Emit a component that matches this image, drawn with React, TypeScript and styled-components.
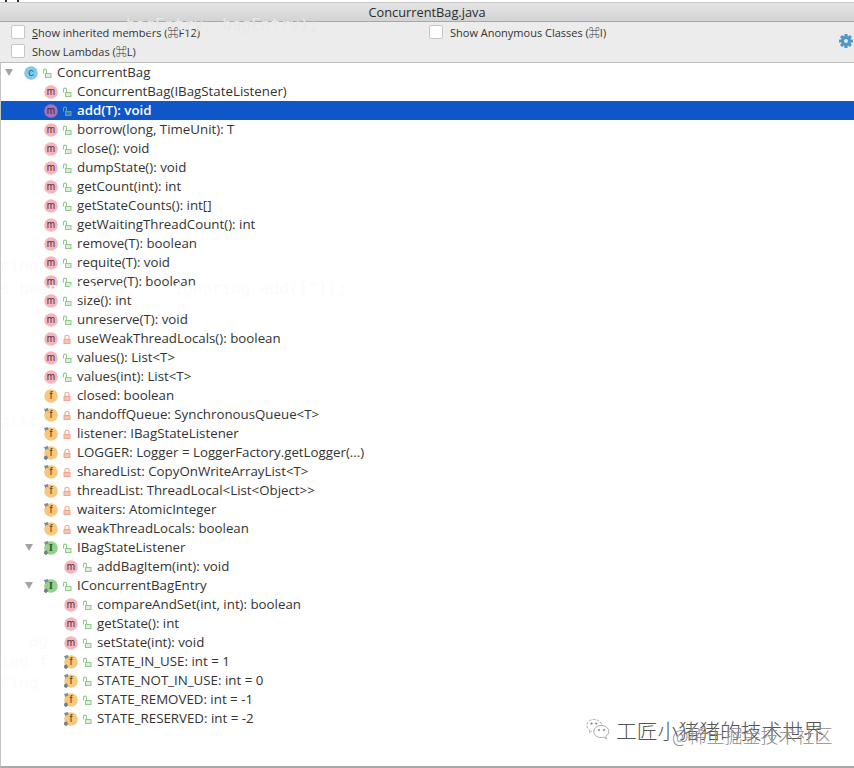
import React from "react";
import styled, { createGlobalStyle } from "styled-components";

const GlobalStyle = createGlobalStyle`
  html, body {
    margin: 0;
    padding: 0;
    background: #ffffff;
  }
  body {
    font-family: "Open Sans", "Liberation Sans", "Noto Sans CJK SC", sans-serif;
    color: #333333;
  }
`;

const Page = styled.div`
  position: relative;
  width: 854px;
  height: 768px;
  overflow: hidden;
  display: flex;
  flex-direction: column;
  background: #ffffff;
`;

const TopStrip = styled.div`
  height: 3px;
  flex: none;
  display: flex;
  gap: 10px;
  padding-left: 5px;
  background: #fff;
  border-bottom: 1px solid #c9c9c9;
  box-sizing: border-box;
`;

const Tick = styled.span`
  width: 2px;
  height: 2px;
  background: #333;
`;

const TitleBar = styled.div`
  height: 19px;
  flex: none;
  box-sizing: border-box;
  background: linear-gradient(#e4e4e4, #d3d3d3);
  border-bottom: 1px solid #a8a8a8;
  display: flex;
  align-items: center;
  justify-content: center;
  font-size: 12.8px;
  color: #2c2c2c;
`;

const Options = styled.div`
  height: 41px;
  flex: none;
  box-sizing: border-box;
  background: #ececec;
  border-bottom: 1px solid #bdbdbd;
  display: grid;
  grid-template-columns: 429px 1fr 16px;
  grid-template-rows: 19px 19px;
`;

const OptionCell = styled.label<{ $pad: number }>`
  display: flex;
  align-items: center;
  font-size: 11px;
  color: #333;
  padding-left: ${(p) => p.$pad}px;
`;

const Box = styled.span`
  width: 12px;
  height: 12px;
  margin-right: 7px;
  border-radius: 2px;
  border: 1px solid #c6c6c6;
  background: #ffffff;
  box-sizing: content-box;
`;

const GearCell = styled.div`
  grid-column: 3;
  grid-row: 1 / span 2;
  display: flex;
  align-items: center;
  justify-content: flex-start;
  margin-left: 1px;
`;

const Tree = styled.div`
  flex: 1;
  box-sizing: border-box;
  border-left: 1px solid #c4c4c4;
  border-bottom: 2px solid #a9a9a9;
  display: flex;
  flex-direction: column;
`;

const Row = styled.div<{ $selected?: boolean; $indent: number }>`
  height: 19px;
  flex: none;
  display: flex;
  align-items: center;
  padding-left: ${(p) => p.$indent}px;
  background: ${(p) => (p.$selected ? "#0f56c9" : "transparent")};
  color: ${(p) => (p.$selected ? "#ffffff" : "#333333")};
  font-weight: ${(p) => (p.$selected ? 600 : 400)};
  font-size: 13.3px;
  white-space: nowrap;
`;

const RowLabel = styled.span`
  margin-bottom: 2px;
`;

const Arrow = styled.span`
  width: 0;
  height: 0;
  flex: none;
  margin: 0 10px 0 -18px;
  border-left: 4px solid transparent;
  border-right: 4px solid transparent;
  border-top: 7px solid #a3a3a3;
`;

const IconSlot = styled.span`
  display: flex;
  flex: none;
  margin-right: 3px;
`;

const LockSlot = styled.span`
  display: flex;
  flex: none;
  margin-right: 5px;
`;

const Ghost = styled.div<{ $top: number; $left: number; $tone?: string }>`
  position: absolute;
  top: ${(p) => p.$top}px;
  left: ${(p) => p.$left}px;
  font-family: "DejaVu Sans Mono", monospace;
  font-size: 16px;
  color: ${(p) => p.$tone ?? "#fbfbfb"};
  white-space: pre;
  pointer-events: none;
`;

const Watermark = styled.div`
  position: absolute;
  left: 586px;
  top: 715px;
  display: flex;
  align-items: center;
  pointer-events: none;
`;

const WatermarkText = styled.span`
  margin-left: 6px;
  font-size: 20.8px;
  color: #555;
  font-family: "Noto Sans CJK SC", sans-serif;
  font-weight: 300;
`;

const WatermarkOver = styled.span`
  position: absolute;
  left: 672px;
  top: 722px;
  font-size: 18px;
  color: #8c8c8c;
  font-family: "Noto Sans CJK SC", sans-serif;
  font-weight: 300;
  pointer-events: none;
`;

type Kind = "c" | "m" | "f" | "i";
type Mod = "final" | "static" | "none";

const palette: Record<Kind, { fill: string; ink: string }> = {
  c: { fill: "#7fc9ea", ink: "#2d5f80" },
  m: { fill: "#f5b5bd", ink: "#5c2a2f" },
  f: { fill: "#f7c77c", ink: "#5f4620" },
  i: { fill: "#94d08e", ink: "#2f5a2c" },
};

function Badge({ kind, mod, selected }: { kind: Kind; mod: Mod; selected?: boolean }) {
  const { fill, ink } = palette[kind];
  const letter = kind === "i" ? "I" : kind;
  return (
    <svg width="16" height="16" viewBox="0 0 16 16">
      <circle cx="8" cy="8" r="6.8" fill={selected ? "#a873b4" : fill} />
      <text
        x="8"
        y="11.300"
        textAnchor="middle"
        fontSize={kind === "m" ? 10 : 11}
        fontFamily={kind === "i" ? "Liberation Serif, serif" : "Liberation Sans, sans-serif"}
        fontWeight={kind === "i" ? 700 : 400}
        fill={selected ? "#3b1e48" : ink}
      >
        {letter}
      </text>
      {(mod === "final" || mod === "static") && (
        <path d="M1 2 L5 1 L5.400 4.200 L3.700 3.800 L2.500 5.500 Z" fill="#7f8c94" />
      )}
      {mod === "static" && (
        <path d="M1.500 11 L4 10.500 L5 13.300 L3 15.300 L0.800 13.500 Z" fill="#6f7f8a" />
      )}
    </svg>
  );
}

function Lock({ open, selected }: { open: boolean; selected?: boolean }) {
  const color = open ? (selected ? "#62a888" : "#8fca8b") : "#f0a48c";
  const fill = open ? (selected ? "#3c7cb0" : "#dcefd9") : "#f6c4b3";
  return (
    <svg width="10" height="12" viewBox="0 0 10 12">
      {open ? (
        <path d="M1.500 6.500V3.600a1.500 1.500 0 0 1 3 0V6" fill="none" stroke={color} strokeWidth="1.100" />
      ) : (
        <path d="M3 6.500V4.200a2 2 0 0 1 4 0V6.500" fill="none" stroke={color} strokeWidth="1.100" />
      )}
      <rect
        x={open ? 3.500 : 2}
        y="6.500"
        width={open ? 5.500 : 6}
        height="4"
        fill={fill}
        stroke={color}
        strokeWidth="1"
      />
    </svg>
  );
}

function Gear() {
  return (
    <svg width="14" height="14" viewBox="0 0 14 14">
      <g fill="#4f97c6">
        {[0, 45, 90, 135].map((a) => (
          <rect key={a} x="5.400" y="0" width="3.200" height="14" rx="0.600" transform={`rotate(${a} 7 7)`} />
        ))}
        <circle cx="7" cy="7" r="5" />
      </g>
      <circle cx="7" cy="7" r="2" fill="#dcebf4" />
    </svg>
  );
}

function WeChat() {
  return (
    <svg width="24" height="26" viewBox="0 0 26 26" fill="none" stroke="#9a9a9a" strokeWidth="0.900">
      <path d="M17 7C15.500 3.500 12 1.500 8.500 1.500 4.200 1.500 1 4.500 1 8c0 2.200 1.200 4 3 5.200L3.400 16l3-1.600c.8.2 1.400.3 2.200.3" strokeDasharray="3 1.400" />
      <path d="M16.500 8C12 8 8.500 11 8.500 14.600c0 3.700 3.500 6.600 8 6.600 1 0 1.900-.1 2.700-.4l2.800 1.800-.6-2.800c2-1.200 3.200-3.100 3.200-5.200C24.600 11 21 8 16.500 8z" />
      <circle cx="6" cy="6" r="0.900" fill="#777" />
      <circle cx="11" cy="6" r="0.900" fill="#777" />
      <circle cx="14" cy="13" r="0.900" fill="#777" />
      <circle cx="19.500" cy="13" r="0.900" fill="#777" />
    </svg>
  );
}

interface Item {
  label: string;
  kind: Kind;
  indent: number;
  mod?: Mod;
  lock?: boolean;
  selected?: boolean;
  expandable?: boolean;
}

const method = (label: string, lock = false, indent = 42): Item => ({ label, kind: "m", indent, lock });
const field = (label: string, mod: Mod = "final", lock = true, indent = 42): Item => ({ label, kind: "f", indent, mod, lock });

const items: Item[] = [
  { label: "ConcurrentBag", kind: "c", indent: 22, expandable: true },
  method("ConcurrentBag(IBagStateListener)"),
  { ...method("add(T): void"), selected: true },
  method("borrow(long, TimeUnit): T"),
  method("close(): void"),
  method("dumpState(): void"),
  method("getCount(int): int"),
  method("getStateCounts(): int[]"),
  method("getWaitingThreadCount(): int"),
  method("remove(T): boolean"),
  method("requite(T): void"),
  method("reserve(T): boolean"),
  method("size(): int"),
  method("unreserve(T): void"),
  method("useWeakThreadLocals(): boolean", true),
  method("values(): List<T>"),
  method("values(int): List<T>"),
  field("closed: boolean", "none"),
  field("handoffQueue: SynchronousQueue<T>"),
  field("listener: IBagStateListener"),
  field("LOGGER: Logger = LoggerFactory.getLogger(...)", "static"),
  field("sharedList: CopyOnWriteArrayList<T>"),
  field("threadList: ThreadLocal<List<Object>>"),
  field("waiters: AtomicInteger"),
  field("weakThreadLocals: boolean"),
  { label: "IBagStateListener", kind: "i", indent: 42, expandable: true, mod: "static" },
  method("addBagItem(int): void", false, 62),
  { label: "IConcurrentBagEntry", kind: "i", indent: 42, expandable: true, mod: "static" },
  method("compareAndSet(int, int): boolean", false, 62),
  method("getState(): int", false, 62),
  method("setState(int): void", false, 62),
  field("STATE_IN_USE: int = 1", "static", false, 62),
  field("STATE_NOT_IN_USE: int = 0", "static", false, 62),
  field("STATE_REMOVED: int = -1", "static", false, 62),
  field("STATE_RESERVED: int = -2", "static", false, 62),
];

export default function App() {
  return (
    <Page>
      <GlobalStyle />
      <TopStrip>
        <Tick />
        <Tick />
      </TopStrip>
      <TitleBar>ConcurrentBag.java</TitleBar>
      <Options>
        <OptionCell $pad={11}>
          <Box />
          <span><u>S</u>how inherited members (⌘F12)</span>
        </OptionCell>
        <OptionCell $pad={0}>
          <Box />
          <span>Show Anonymous Classes (⌘I)</span>
        </OptionCell>
        <GearCell>
          <Gear />
        </GearCell>
        <OptionCell $pad={11}>
          <Box />
          <span>Show Lambdas (⌘L)</span>
        </OptionCell>
      </Options>
      <Tree>
        {items.map((it) => (
          <Row key={it.label} $indent={it.indent} $selected={it.selected}>
            {it.expandable && <Arrow />}
            <IconSlot>
              <Badge kind={it.kind} mod={it.mod ?? "none"} selected={it.selected} />
            </IconSlot>
            <LockSlot>
              <Lock open={!it.lock} selected={it.selected} />
            </LockSlot>
            <RowLabel>{it.label}</RowLabel>
          </Row>
        ))}
      </Tree>
      <Ghost $top={15} $left={126} $tone="#e8e8e8">{"bagEntry, bagEntry);"}</Ghost>
      <Ghost $top={256} $left={0}>ring</Ghost>
      <Ghost $top={279} $left={0}>{"s been closed,    ignoring add()\"));"}</Ghost>
      <Ghost $top={411} $left={0}>ntic</Ghost>
      <Ghost $top={631} $left={0}>{"   ag"}</Ghost>
      <Ghost $top={652} $left={0}>{"tag f"}</Ghost>
      <Ghost $top={673} $left={0}>{"ring"}</Ghost>
      <Watermark>
        <WeChat />
        <WatermarkText>工匠小猪猪的技术世界</WatermarkText>
      </Watermark>
      <WatermarkOver>@稀土掘金技术社区</WatermarkOver>
    </Page>
  );
}
